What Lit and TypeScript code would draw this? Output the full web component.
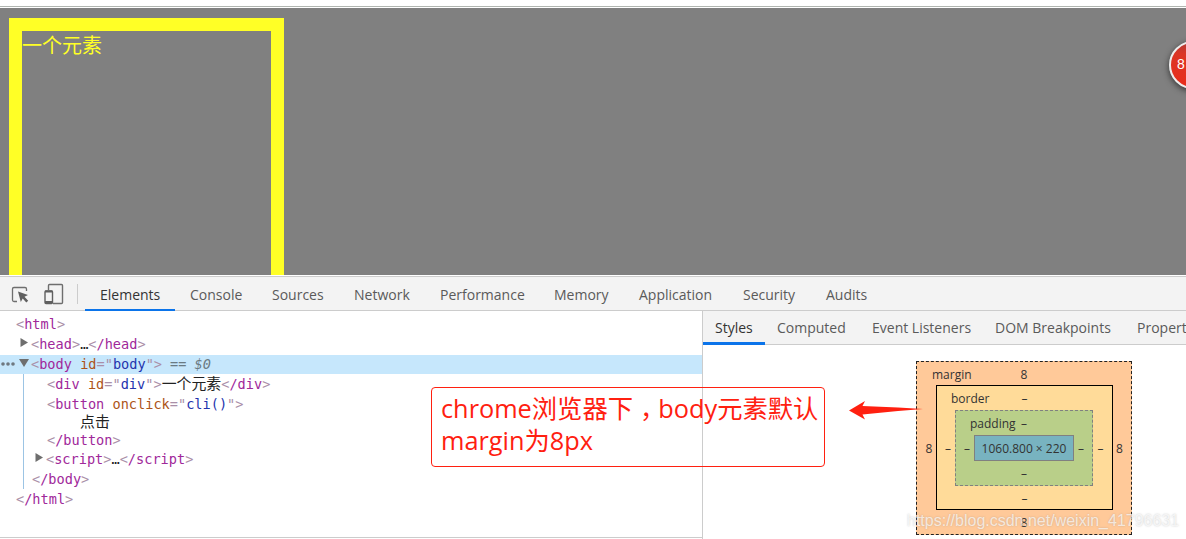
import { LitElement, css, html, svg } from "lit";
import { customElement, property } from "lit/decorators.js";
import { styleMap } from "lit/directives/style-map.js";

interface Tab {
  label: string;
  width: number;
}

const mainTabs: Tab[] = [
  { label: "Elements", width: 90 },
  { label: "Console", width: 82 },
  { label: "Sources", width: 82 },
  { label: "Network", width: 86 },
  { label: "Performance", width: 114 },
  { label: "Memory", width: 85 },
  { label: "Application", width: 104 },
  { label: "Security", width: 83 },
  { label: "Audits", width: 72 },
];

const sideTabs: Tab[] = [
  { label: "Styles", width: 62 },
  { label: "Computed", width: 95 },
  { label: "Event Listeners", width: 123 },
  { label: "DOM Breakpoints", width: 142 },
  { label: "Properties", width: 90 },
];

@customElement("tab-strip")
export class TabStrip extends LitElement {
  @property({ attribute: false })
  tabs: Tab[] = [];

  render() {
    return this.tabs.map(
      (tab, i) => html`
        <div
          class="tab ${i === 0 ? "active" : ""}"
          style=${styleMap({ width: `${tab.width}px` })}
        >
          ${tab.label}
        </div>
      `
    );
  }

  static styles = css`
    :host {
      display: flex;
      height: 100%;
      font-size: 14px;
      color: #5a5a5a;
    }

    .tab {
      box-sizing: border-box;
      flex: none;
      padding-left: var(--tab-padding, 15px);
      line-height: var(--tab-line, 36px);
      white-space: nowrap;
      border-bottom: var(--tab-bar, 2px) solid transparent;
    }

    .active {
      color: #333;
      border-bottom-color: #0b74ea;
    }
  `;
}

@customElement("dom-tree")
export class DomTree extends LitElement {
  tag(name: string, attr?: string, value?: string) {
    return html`<i>&lt;</i><b>${name}</b>${attr
        ? html` <em>${attr}</em><i>="</i><u>${value}</u><i>"</i>`
        : ""}<i>&gt;</i>`;
  }

  arrow(open: boolean) {
    return svg`<svg class="arrow" width="10" height="10" viewBox="0 0 10 10">
      <path fill="#6e6e6e" d=${open ? "M0 1H10L5 9Z" : "M1.500 0L9 4.500L1.500 9Z"} />
    </svg>`;
  }

  render() {
    return html`
      <div class="row root">${this.tag("html")}</div>
      <div class="row head">
        ${this.arrow(false)}${this.tag("head")}…${this.tag("/head")}
      </div>
      <div class="row selected">
        <svg class="dots" width="14" height="4" viewBox="0 0 14 4">
          <circle cx="2" cy="2" r="1.8" />
          <circle cx="7" cy="2" r="1.8" />
          <circle cx="12" cy="2" r="1.8" />
        </svg>
        ${this.arrow(true)}${this.tag("body", "id", "body")}
        <span class="ref">== <span class="dollar">$0</span></span>
      </div>
      <div class="body">
        <div class="row child">
          ${this.tag("div", "id", "div")}<span class="cjk">一个元素</span
          >${this.tag("/div")}
        </div>
        <div class="row child">${this.tag("button", "onclick", "cli()")}</div>
        <div class="row text"><span class="cjk">点击</span></div>
        <div class="row child close">${this.tag("/button")}</div>
        <div class="row script">
          ${this.arrow(false)}${this.tag("script")}…${this.tag("/script")}
        </div>
        <div class="row end">${this.tag("/body")}</div>
      </div>
      <div class="row root">${this.tag("/html")}</div>
    `;
  }

  static styles = css`
    :host {
      display: block;
      padding-top: 3px;
      font-family: "DejaVu Sans Mono", "Noto Sans CJK SC", monospace;
      font-size: 13.6px;
      color: #222;
    }

    .row {
      display: flex;
      align-items: center;
      box-sizing: border-box;
      height: 20px;
      white-space: pre;
    }

    b,
    i,
    em,
    u {
      font-style: normal;
      font-weight: normal;
      text-decoration: none;
    }

    b {
      color: #a0289a;
    }

    i {
      color: #aa8fa8;
    }

    em {
      color: #ad5418;
      margin-left: 8.2px;
    }

    u {
      color: #2434ae;
    }

    .root {
      padding-left: 16px;
    }

    .arrow {
      flex: none;
      width: 10px;
      margin-right: 2px;
      margin-top: -3px;
    }

    .head {
      padding-left: 19px;
    }

    .selected {
      height: 19px;
      margin-top: 1px;
      padding: 0 0 1px 1px;
      background: #c6e7fc;
    }

    .dots {
      fill: #6e7880;
      margin-right: 4px;
    }

    .ref {
      margin-left: 8px;
      color: #6b7a83;
    }

    .dollar {
      font-style: italic;
    }

    .cjk {
      font-family: "Noto Sans CJK SC", sans-serif;
      font-size: 14.9px;
      line-height: 18px;
      padding-bottom: 2px;
    }

    .body {
      margin-left: 23px;
      height: 115px;
      border-left: 1px solid #9cc4e4;
    }

    .child {
      padding-left: 23px;
    }

    .text {
      height: 16px;
      padding-left: 56px;
    }

    .close {
      height: 19px;
    }

    .script {
      padding-left: 10px;
    }

    .end {
      padding-left: 8px;
    }
  `;
}

@customElement("box-model")
export class BoxModel extends LitElement {
  layer(name: string, value: string, inner: unknown) {
    return html`
      <div class="layer ${name}">
        <span class="label">${name}</span>
        <span class="top">${value}</span>
        <span class="left">${value}</span>
        ${inner}
        <span class="right">${value}</span>
        <span class="bottom">${value}</span>
      </div>
    `;
  }

  render() {
    const content = html`<div class="content">1060.800 × 220</div>`;
    return this.layer(
      "margin",
      "8",
      this.layer("border", "–", this.layer("padding", "–", content))
    );
  }

  static styles = css`
    :host {
      display: block;
      font-size: 12px;
      line-height: 16px;
      color: #333;
    }

    .layer {
      position: relative;
      box-sizing: border-box;
      display: grid;
      text-align: center;
      align-items: center;
    }

    .label {
      position: absolute;
      left: 15px;
      top: 5px;
    }

    .top,
    .bottom {
      grid-column: 1 / -1;
      padding-top: 2px;
    }

    .left {
      padding: 2px 0 0 4px;
    }

    .right {
      padding: 2px 4px 0 0;
    }

    .margin {
      width: 216px;
      height: 174px;
      grid-template: 23px 125px 24px / 19px 177px 18px;
      background: #ffc999;
      border: 1px dashed #222;
    }

    .margin > .left {
      padding-left: 5px;
    }

    .margin > .right {
      padding-right: 5px;
    }

    .border {
      width: 177px;
      height: 125px;
      grid-template: 24px 76px 23px / 18px 138px 19px;
      background: #ffdb99;
      border: 1px solid #000;
    }

    .padding {
      width: 138px;
      height: 76px;
      grid-template: 24px 26px 24px / 18px 100px 18px;
      background: #b9cf89;
      border: 1px dashed #808080;
    }

    .border > .label,
    .padding > .label {
      left: 14px;
    }

    .content {
      box-sizing: border-box;
      height: 26px;
      line-height: 26px;
      background: #78b3c0;
      border: 1px solid #808080;
      white-space: nowrap;
    }
  `;
}

@customElement("app-root")
export class AppRoot extends LitElement {
  render() {
    return html`
      <div class="chrome"></div>
      <div class="page">
        <div class="box">一个元素</div>
        <div class="badge">8</div>
      </div>
      <div class="toolbar">
        <svg width="85" height="33" viewBox="0 0 85 33" fill="none">
          <path
            d="M17 24.500H14Q12.500 24.500 12.500 23V12Q12.500 10.500 14 10.500H25Q26.500 10.500 26.500 12V14"
            stroke="#6e6e6e"
            stroke-width="1.300"
          />
          <path
            d="M18 14.500L28 18L24.500 19.800L28.200 23.800L26.300 25.500L22.700 21.500L20.800 25Z"
            fill="#5f5f5f"
          />
          <path
            d="M48.500 13V8.500Q48.500 7.500 49.500 7.500H61.500Q62.500 7.500 62.500 8.500V25.500Q62.500 26.500 61.500 26.500H53"
            stroke="#6e6e6e"
            stroke-width="1.400"
          />
          <rect x="45" y="14" width="7.500" height="12.500" rx="1" stroke="#5f5f5f" stroke-width="1.400" />
          <path d="M45 14.500H52.500M45 25H52.500" stroke="#5f5f5f" stroke-width="2" />
          <path d="M77.500 7V27" stroke="#ccc" />
        </svg>
        <tab-strip .tabs=${mainTabs}></tab-strip>
      </div>
      <div class="panels">
        <div class="elements"><dom-tree></dom-tree></div>
        <div class="sidebar">
          <div class="subtabs"><tab-strip .tabs=${sideTabs}></tab-strip></div>
          <box-model></box-model>
        </div>
      </div>
      <div class="note">
        chrome浏览器下<span class="comma">，</span>body元素默认<br />margin为8px
      </div>
      <svg class="pointer" width="76" height="22" viewBox="0 0 76 22">
        <path fill="#ff2010" d="M1 11.500L17 2L14.500 7L50 8.500L75 10L50 12L14.500 15.500L17 20.500Z" />
      </svg>
      <div class="watermark">https://blog.csdn.net/weixin_41796631</div>
    `;
  }

  static styles = css`
    :host {
      display: flex;
      flex-direction: column;
      position: relative;
      width: 1186px;
      height: 539px;
      overflow: hidden;
      background: #fff;
      font-family: "Open Sans", "Noto Sans CJK SC", sans-serif;
    }

    .chrome {
      box-sizing: border-box;
      flex: none;
      height: 8px;
      border-bottom: 1px solid #fff;
      background: linear-gradient(#fff 6px, #b0b5b0 6px);
    }

    .page {
      position: relative;
      box-sizing: border-box;
      flex: none;
      height: 267px;
      padding: 10px 9px 0;
      overflow: hidden;
      background: #808080;
    }

    .box {
      box-sizing: border-box;
      width: 275px;
      height: 275px;
      border: 13px solid #ffff26;
      color: #ffff26;
      font-family: "Noto Sans CJK SC", sans-serif;
      font-size: 20px;
      line-height: 27px;
    }

    .badge {
      position: absolute;
      left: 1169px;
      top: 33px;
      box-sizing: border-box;
      width: 48px;
      height: 48px;
      padding-left: 6px;
      border: 2px solid #eee;
      border-radius: 50%;
      background: linear-gradient(#b33a35 0, #dc3525 25%, #e82d1c);
      box-shadow: 0 2px 6px #333;
      color: #fff;
      font-family: "Liberation Sans", sans-serif;
      font-size: 14px;
      line-height: 43px;
    }

    .toolbar {
      box-sizing: border-box;
      display: flex;
      flex: none;
      height: 35px;
      margin-top: 1px;
      border-top: 1px solid #ccc;
      border-bottom: 1px solid #ccc;
      background: #f3f3f3;
    }

    .toolbar tab-strip {
      height: 34px;
    }

    .panels {
      display: flex;
      height: 228px;
    }

    .elements {
      box-sizing: border-box;
      width: 702px;
      height: 227px;
      border-bottom: 1px solid #ccc;
    }

    .sidebar {
      width: 484px;
      box-sizing: border-box;
      border-left: 1px solid #ccc;
      overflow: hidden;
    }

    .subtabs {
      --tab-padding: 12px;
      --tab-line: 34px;
      --tab-bar: 3px;
      box-sizing: border-box;
      height: 34px;
      border-bottom: 1px solid #ccc;
      background: #f3f3f3;
    }

    .subtabs tab-strip {
      height: 34px;
    }

    box-model {
      margin: 16px 0 0 213px;
    }

    .note {
      position: absolute;
      left: 431px;
      top: 387px;
      box-sizing: border-box;
      width: 394px;
      height: 80px;
      padding: 4px 9px;
      border: 1px solid #ff2010;
      border-radius: 4px;
      color: #ff2010;
      font-size: 25.3px;
      line-height: 32px;
      white-space: nowrap;
    }

    .comma {
      margin: 0 -7px 0 7px;
    }

    .pointer {
      position: absolute;
      left: 848px;
      top: 399px;
    }

    .watermark {
      position: absolute;
      left: 907px;
      top: 511px;
      font-family: "Liberation Sans", sans-serif;
      font-size: 16px;
      line-height: 20px;
      color: rgba(255, 255, 255, 0.7);
      text-shadow: 0 0 2px rgba(120, 120, 120, 0.4);
      white-space: nowrap;
    }
  `;
}

declare global {
  interface HTMLElementTagNameMap {
    "app-root": AppRoot;
    "tab-strip": TabStrip;
    "dom-tree": DomTree;
    "box-model": BoxModel;
  }
}
